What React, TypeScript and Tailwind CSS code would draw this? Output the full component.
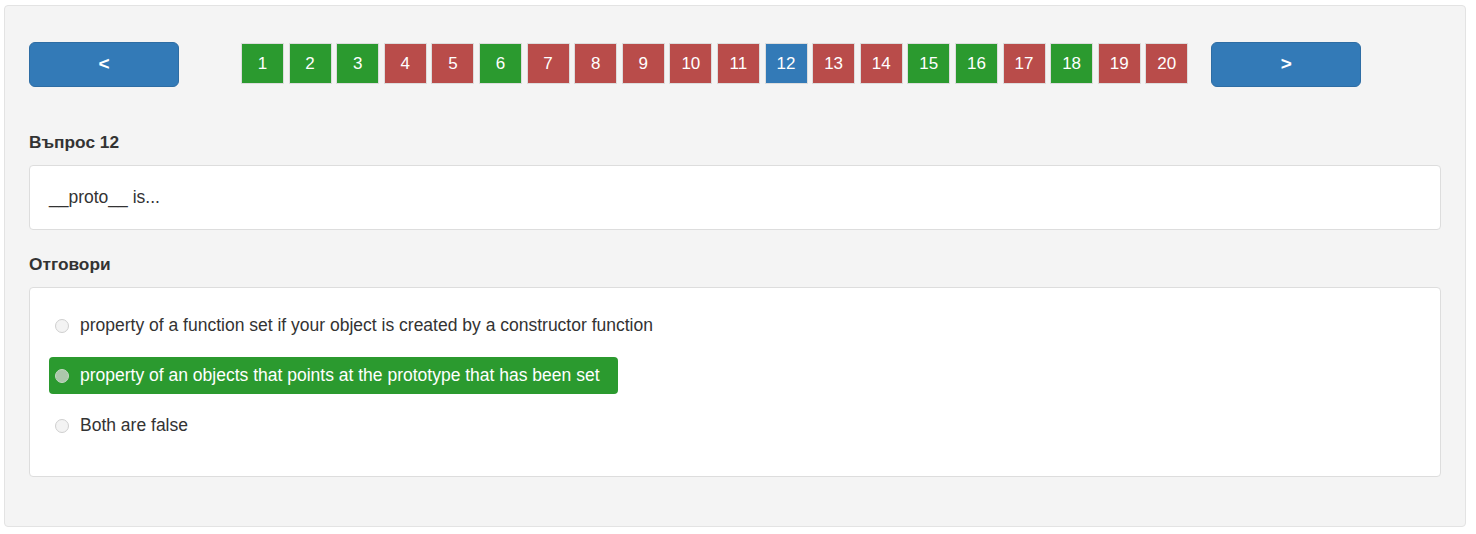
import React, { useState } from "react";

const statuses: Record<number, "ok" | "bad" | "cur"> = {
  1: "ok", 2: "ok", 3: "ok", 4: "bad", 5: "bad", 6: "ok", 7: "bad", 8: "bad", 9: "bad", 10: "bad",
  11: "bad", 12: "cur", 13: "bad", 14: "bad", 15: "ok", 16: "ok", 17: "bad", 18: "ok", 19: "bad", 20: "bad",
};

const answers = [
  "property of a function set if your object is created by a constructor function",
  "property of an objects that points at the prototype that has been set",
  "Both are false",
];

const boxColor = {
  ok: "bg-[#2b9a2f]",
  bad: "bg-[#b94c4a]",
  cur: "bg-[#337ab7]",
};

const App = () => {
  const [selected, setSelected] = useState(1);

  return (
    <div className="w-[1476px] h-[534px] bg-white pt-[5px] pl-[4px] font-['Liberation_Sans',Arial,sans-serif] text-[#333]">
      <div className="w-[1462px] h-[522px] bg-[#f4f4f4] border border-[#e3e3e3] rounded-[4px] pt-[36px] px-[24px]">
        <div className="flex items-start">
          <button className="w-[150px] h-[45px] rounded-[6px] bg-[#337ab7] border border-[#2e6da4] text-white text-[19px] font-bold">
            &lt;
          </button>
          <div className="flex gap-[4.6px] ml-[62px] mt-[1px]">
            {Array.from({ length: 20 }, (_, i) => i + 1).map((n) => (
              <div
                key={n}
                className={`w-[43px] h-[41px] border border-[#ddd] flex items-center justify-center text-white text-[17px] ${boxColor[statuses[n]]}`}
              >
                {n}
              </div>
            ))}
          </div>
          <button className="w-[150px] h-[45px] ml-[23px] rounded-[6px] bg-[#337ab7] border border-[#2e6da4] text-white text-[19px] font-bold">
            &gt;
          </button>
        </div>

        <div className="mt-[45px] text-[17.3px] leading-[20px] font-bold">Въпрос 12</div>
        <div className="mt-[13px] h-[65px] bg-white border border-[#ddd] rounded-[4px] flex items-center px-[19px] text-[17.5px]">
          __proto__ is...
        </div>

        <div className="mt-[24px] text-[17.3px] leading-[20px] font-bold">Отговори</div>
        <div className="mt-[13px] h-[190px] bg-white border border-[#ddd] rounded-[4px] pt-[19px] px-[19px] flex flex-col items-start gap-[13px]">
          {answers.map((a, i) => {
            const on = selected === i;
            return (
              <div
                key={i}
                onClick={() => setSelected(i)}
                className={`h-[37px] inline-flex items-center pl-[6px] pr-[18px] rounded-[4px] text-[17.5px] cursor-pointer ${
                  on ? "bg-[#2b9a2f] text-white" : "text-[#333]"
                }`}
              >
                <span
                  className={`w-[14px] h-[14px] rounded-full border ${
                    on ? "bg-[#adc7ac] border-[#c5d9c4]" : "bg-[#f3f3f3] border-[#cfcfcf]"
                  }`}
                />
                <span className="ml-[11px]">{a}</span>
              </div>
            );
          })}
        </div>
      </div>
    </div>
  );
};

export default App;
